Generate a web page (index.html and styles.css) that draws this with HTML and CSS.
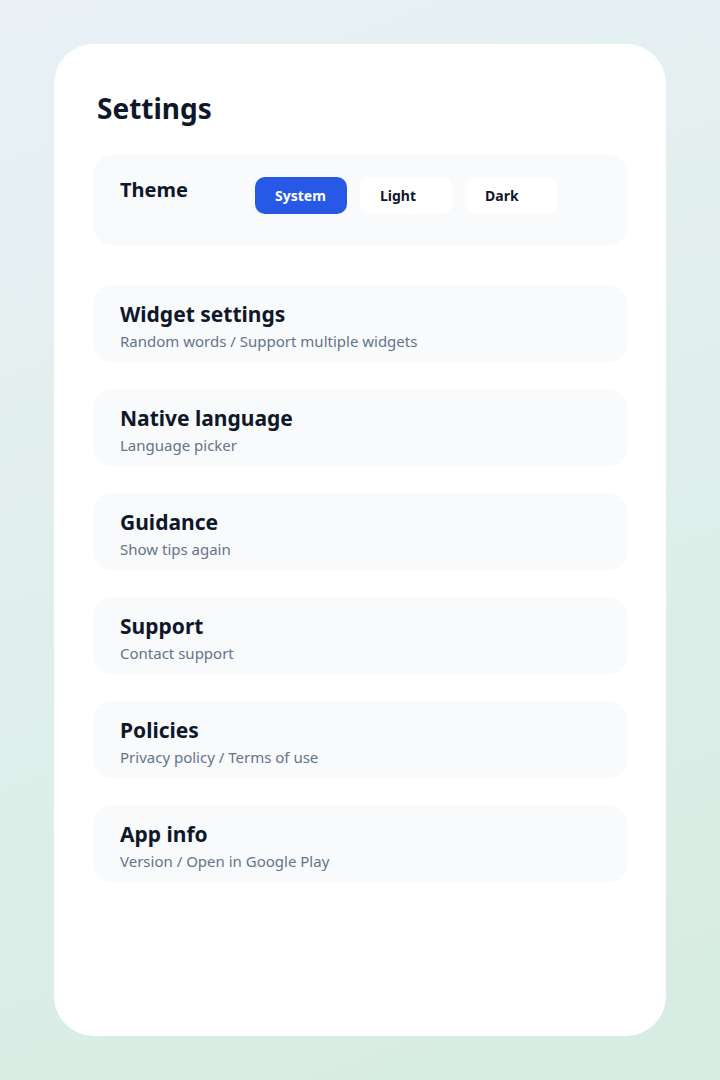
FILE: index.html
```html
<!DOCTYPE html>
<html lang="en">
<head>
<meta charset="utf-8">
<title>Settings</title>
<link rel="stylesheet" href="styles.css">
</head>
<body>
<main class="card">
  <h1 class="title">Settings</h1>
  <section class="theme">
    <div class="theme-label">Theme</div>
    <div class="theme-options">
      <button class="opt opt-active">System</button>
      <button class="opt">Light</button>
      <button class="opt">Dark</button>
    </div>
  </section>
  <div class="list">
    <div class="item">
      <div class="item-title">Widget settings</div>
      <div class="item-sub">Random words / Support multiple widgets</div>
    </div>
    <div class="item">
      <div class="item-title">Native language</div>
      <div class="item-sub">Language picker</div>
    </div>
    <div class="item">
      <div class="item-title">Guidance</div>
      <div class="item-sub">Show tips again</div>
    </div>
    <div class="item">
      <div class="item-title">Support</div>
      <div class="item-sub">Contact support</div>
    </div>
    <div class="item">
      <div class="item-title">Policies</div>
      <div class="item-sub">Privacy policy / Terms of use</div>
    </div>
    <div class="item">
      <div class="item-title">App info</div>
      <div class="item-sub">Version / Open in Google Play</div>
    </div>
  </div>
</main>
</body>
</html>
```

FILE: styles.css
```css
* { box-sizing: border-box; }
html, body { margin: 0; padding: 0; }
body {
  width: 720px;
  height: 1080px;
  background: linear-gradient(160deg, #e9f1f6 0%, #d6ece1 100%);
  font-family: "Noto Sans", "Open Sans", sans-serif;
  color: #0f172a;
  padding: 44px 54px 44px 54px;
}
.card {
  background: #ffffff;
  border-radius: 40px;
  height: 992px;
  padding: 46px 38px 0 39px;
}
.title {
  margin: 0 0 0 4px;
  font-size: 28px;
  font-weight: 700;
  line-height: 36px;
}
.theme {
  background: #f8fafc;
  border-radius: 20px;
  height: 90px;
  padding: 21px 27px;
  display: flex;
  align-items: flex-start;
  margin-top: 29px;
}
.theme-label {
  font-size: 20px;
  font-weight: 700;
  line-height: 28px;
  width: 135px;
}
.theme-options {
  display: flex;
  gap: 13px;
  margin-top: 1px;
}
.opt {
  width: 92px;
  height: 37px;
  border: none;
  border-radius: 10px;
  background: #ffffff;
  font-family: inherit;
  font-size: 14px;
  font-weight: 700;
  color: #0f172a;
  padding: 0 0 0 20px;
  text-align: left;
}
.opt-active {
  background: #2859e6;
  color: #ffffff;
}
.list {
  margin-top: 40px;
  display: flex;
  flex-direction: column;
  gap: 27px;
}
.item {
  background: #f8fafc;
  border-radius: 20px;
  height: 77px;
  padding: 15px 27px 0 27px;
}
.item-title {
  font-size: 21px;
  font-weight: 700;
  line-height: 28px;
}
.item-sub {
  font-size: 15px;
  line-height: 22px;
  color: #64748b;
  margin-top: 2px;
}
```
